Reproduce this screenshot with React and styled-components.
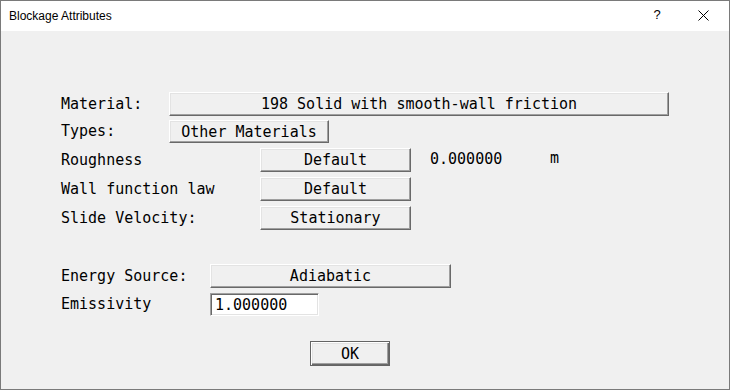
import React from 'react'
import styled, { createGlobalStyle } from 'styled-components'

const GlobalStyle = createGlobalStyle`
  html, body {
    margin: 0;
    padding: 0;
    background: #f0f0f0;
  }
  * {
    box-sizing: border-box;
  }
`

function App() {
  return (
    <>
      <GlobalStyle />
      <Window>
        <TitleBar>
          <Title>Blockage Attributes</Title>
          <TitleButtons>
            <HelpMark>?</HelpMark>
            <CloseMark>
              <svg width="11" height="11" viewBox="0 0 11 11">
                <path d="M0.5 0.5 L10.5 10.5 M10.5 0.5 L0.5 10.5" stroke="#000" strokeWidth="1" fill="none" />
              </svg>
            </CloseMark>
          </TitleButtons>
        </TitleBar>
        <Body>
          <Row $top={61}>
            <Label $width={108}>Material:</Label>
            <Button $width={500}>198 Solid with smooth-wall friction</Button>
          </Row>
          <Row $top={4} $height={23}>
            <Label $width={108}>Types:</Label>
            <Button $width={160} $height={23}>Other Materials</Button>
          </Row>
          <Row $top={5}>
            <Label $width={199}>Roughness</Label>
            <Button $width={151}>Default</Button>
            <Value>0.000000</Value>
            <Unit>m</Unit>
          </Row>
          <Row $top={5}>
            <Label $width={199}>Wall function law</Label>
            <Button $width={151}>Default</Button>
          </Row>
          <Row $top={5}>
            <Label $width={199}>Slide Velocity:</Label>
            <Button $width={151}>Stationary</Button>
          </Row>
          <Row $top={34}>
            <Label $width={149}>Energy Source:</Label>
            <Button $width={241}>Adiabatic</Button>
          </Row>
          <Row $top={5} $height={23}>
            <Label $width={149}>Emissivity</Label>
            <Input defaultValue="1.000000" />
          </Row>
          <Footer>
            <OkButton>OK</OkButton>
          </Footer>
        </Body>
      </Window>
    </>
  )
}

export default App

const Window = styled.div`
  width: 730px;
  height: 390px;
  border: 1px solid #7a7a7a;
  background: #f0f0f0;
  display: flex;
  flex-direction: column;
  overflow: hidden;
`
const TitleBar = styled.div`
  height: 30px;
  background: #fff;
  display: flex;
  align-items: center;
  justify-content: space-between;
  padding-left: 8px;
  flex-shrink: 0;
`
const Title = styled.div`
  font-family: "Liberation Sans", Arial, sans-serif;
  font-size: 12px;
  color: #000;
  margin-top: -1px;
`
const TitleButtons = styled.div`
  display: flex;
  align-items: center;
  height: 100%;
`
const HelpMark = styled.div`
  width: 46px;
  display: flex;
  justify-content: center;
  font-family: "Liberation Sans", Arial, sans-serif;
  font-size: 13px;
  color: #000;
  margin-top: -3px;
`
const CloseMark = styled.div`
  width: 46px;
  height: 100%;
  display: flex;
  align-items: center;
  justify-content: center;
  margin-right: 3px;
  margin-top: -2px;
`
const Body = styled.div`
  flex: 1;
  padding-left: 60px;
  font-family: "DejaVu Sans Mono", "Liberation Mono", monospace;
  font-size: 15px;
  color: #000;
`
const Row = styled.div`
  display: flex;
  align-items: center;
  height: ${p => p.$height || 24}px;
  margin-top: ${p => p.$top}px;
`
const Label = styled.div`
  width: ${p => p.$width}px;
  flex-shrink: 0;
  white-space: pre;
  margin-top: -1px;
`
const Button = styled.div`
  width: ${p => p.$width}px;
  height: ${p => p.$height || 24}px;
  display: flex;
  align-items: center;
  justify-content: center;
  background: #f0f0f0;
  border: 1px solid;
  border-color: #fff #696969 #696969 #fff;
  box-shadow: inset -1px -1px #a0a0a0, inset 1px 1px #e3e3e3;
  white-space: pre;
`
const Value = styled.div`
  margin-left: 19px;
  width: 120px;
  margin-top: -2px;
`
const Unit = styled.div`
  margin-top: -4px;
`
const Input = styled.input`
  width: 109px;
  height: 23px;
  font: inherit;
  color: #000;
  background: #fff;
  border: 1px solid;
  border-color: #a0a0a0 #fff #fff #a0a0a0;
  box-shadow: inset 1px 1px #696969, inset -1px -1px #e3e3e3;
  padding: 0 0 0 4px;
  outline: none;
`
const Footer = styled.div`
  margin-top: 25px;
  padding-left: 249px;
`
const OkButton = styled.div`
  width: 80px;
  height: 25px;
  display: flex;
  align-items: center;
  justify-content: center;
  border: 1px solid #646464;
  background: #f0f0f0;
  box-shadow: inset 1px 1px #fff, inset -1px -1px #696969, inset -2px -2px #a0a0a0, inset 2px 2px #e3e3e3;
  font-size: 15px;
`
